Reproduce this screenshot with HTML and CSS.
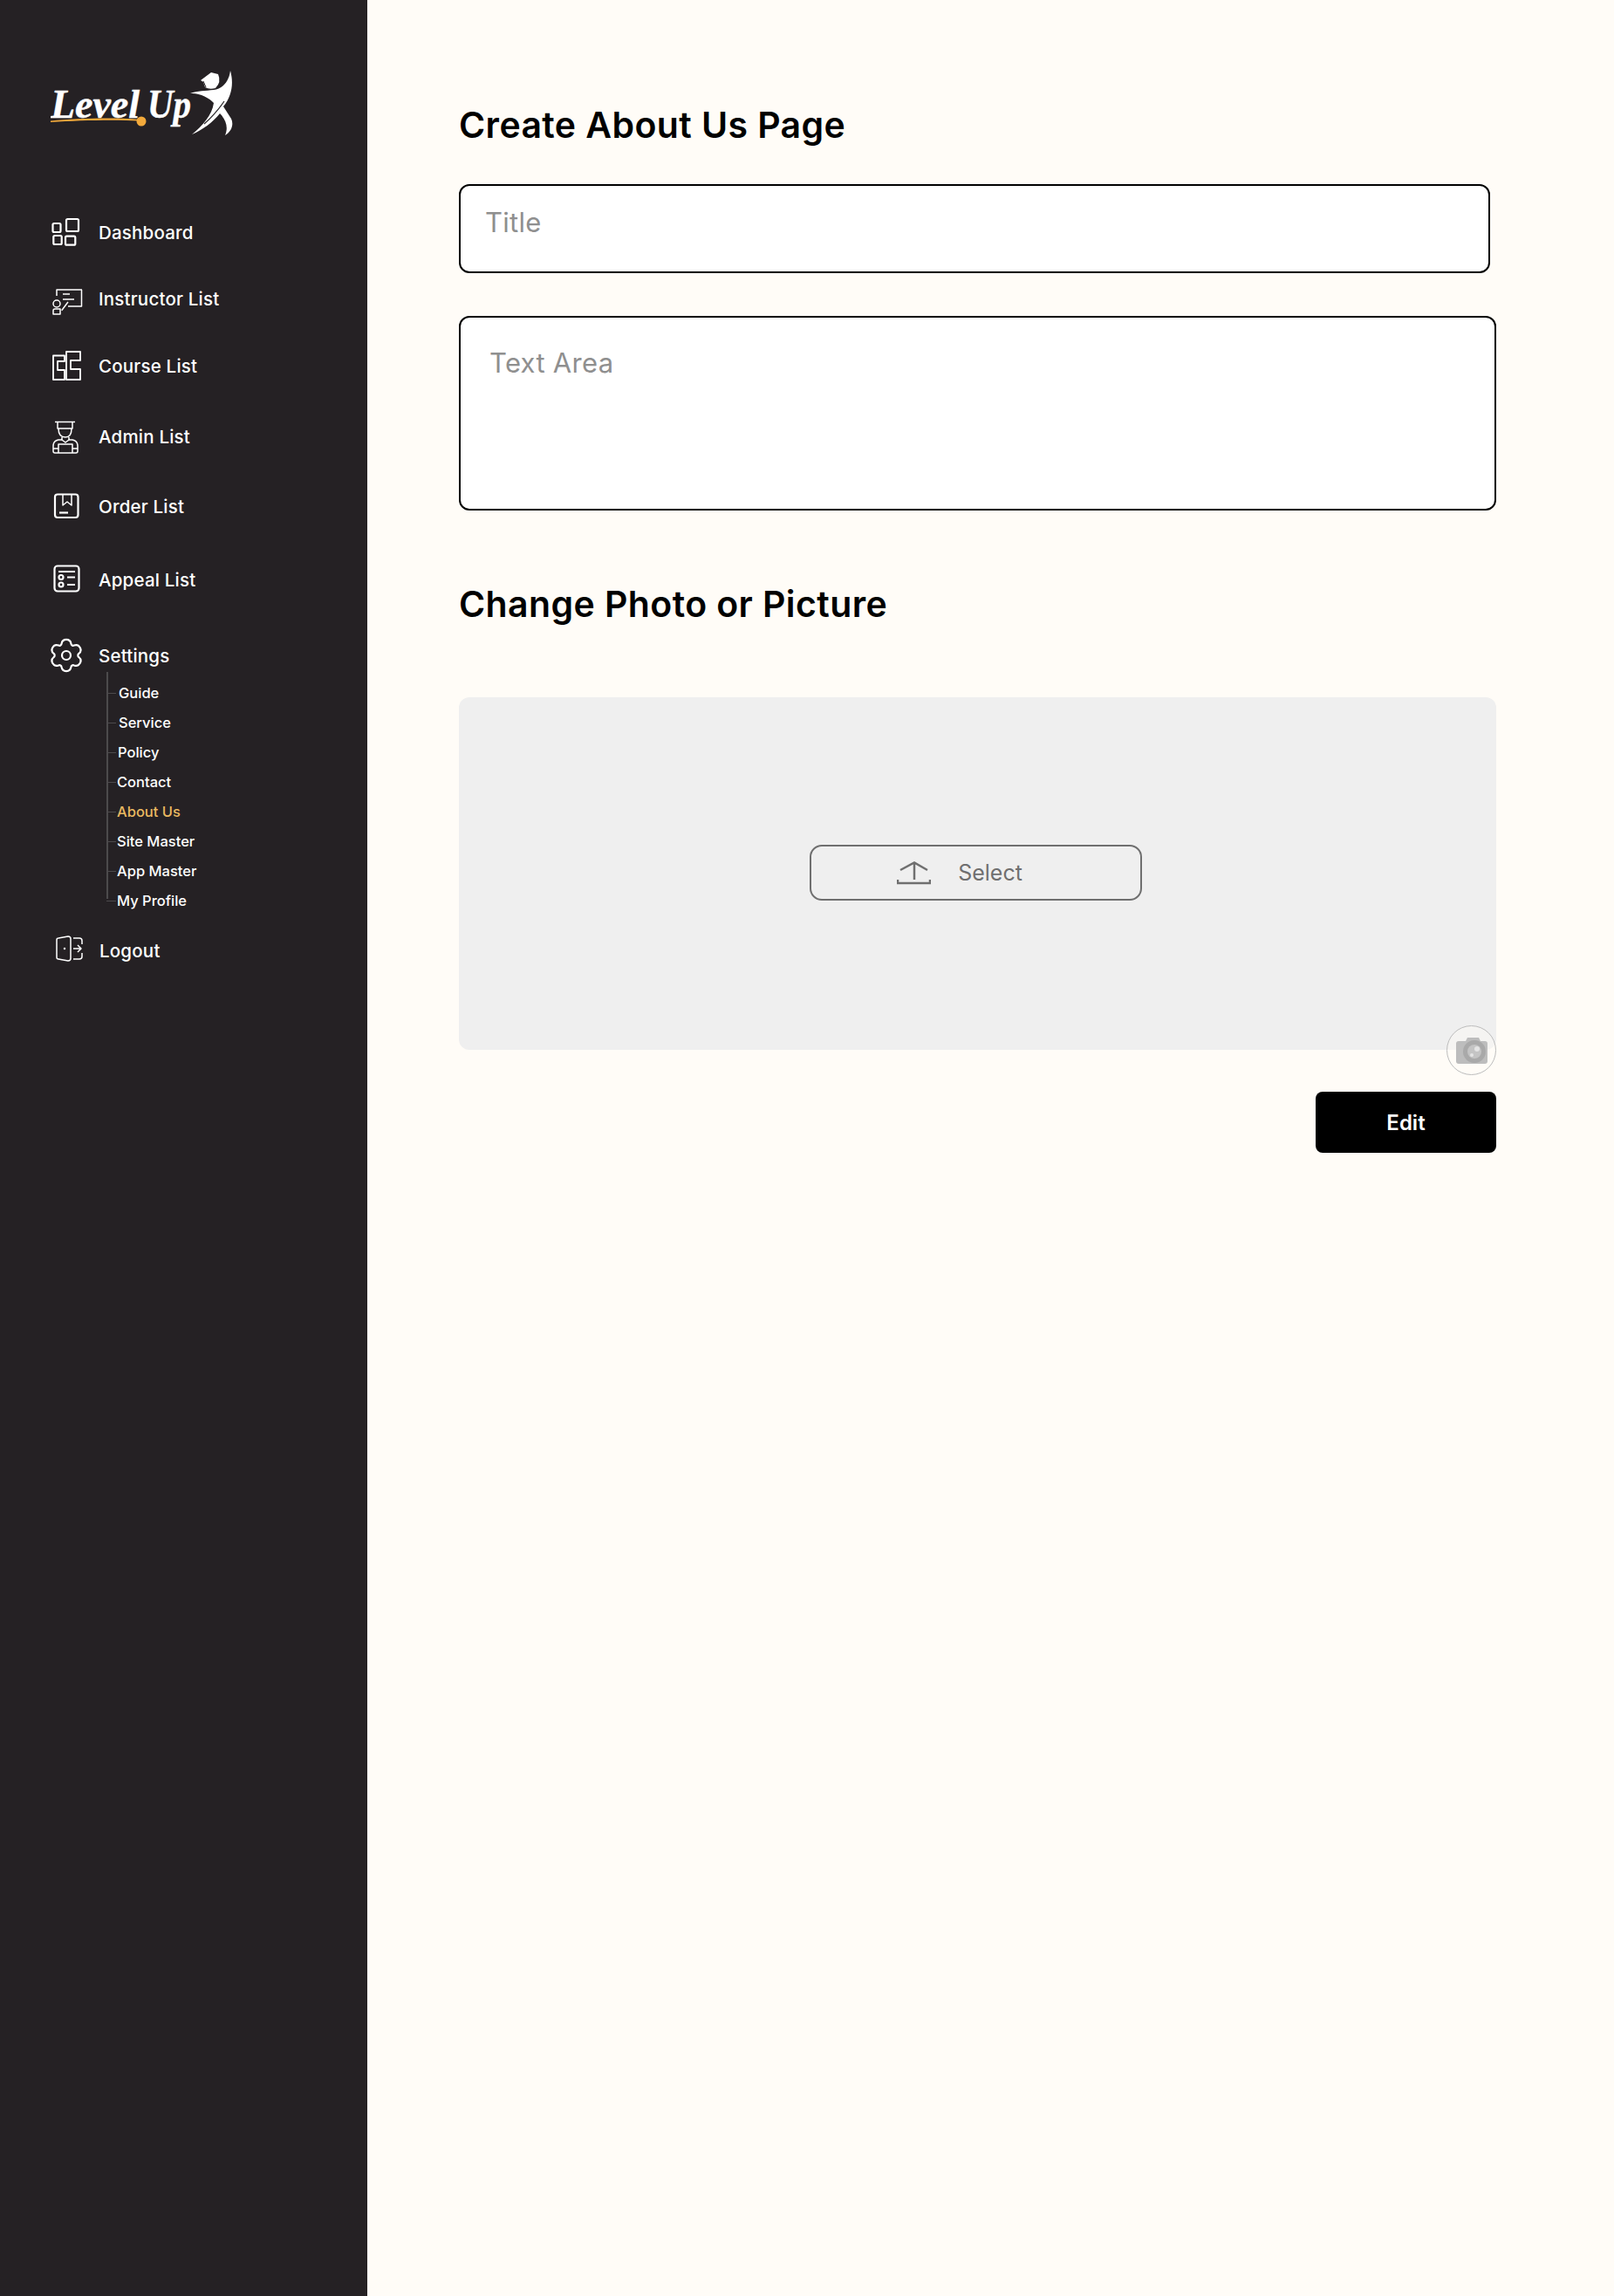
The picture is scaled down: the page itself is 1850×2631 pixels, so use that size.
FILE: index.html
```html
<!DOCTYPE html>
<html lang="en">
<head>
    <meta charset="UTF-8">
    <meta name="viewport" content="width=device-width, initial-scale=1.0">
    <title>Create About Us Page</title>
    <link rel="stylesheet" href="styles.css">
</head>
<body>

    <aside class="sidebar">
        <svg class="logo" viewBox="58 80 212 78" width="212" height="78">
            <text class="logo-text" x="58" y="135" textLength="102" lengthAdjust="spacingAndGlyphs">Level</text>
            <text class="logo-text" x="169" y="135" textLength="50" lengthAdjust="spacingAndGlyphs">Up</text>
            <path d="M58 138.500C90 135.500 130 134.500 160 137L160 138.500C130 137 90 138 58 140Z" fill="#f2a93b"/>
            <circle cx="162" cy="139" r="5.500" fill="#f2a93b"/>
            <path d="M218 107C226 104 236 104 245 103C253 102 262 96 264 81C268 95 266 110 256 122L265 136C268 142 266 150 258 155C262 146 259 137 252 130C244 140 232 149 220 154C232 144 243 132 245 118C240 112 228 106 218 107Z" fill="#fff"/>
            <path d="M257 116C250 126 242 135 234 142" fill="none" stroke="#242124" stroke-width="1.200"/>
            <path d="M230 92L242 83L250 85Q254 94 247 101Q240 103 235 100L233 94Z" fill="#fff"/>
            <path d="M233 93L236 100" fill="none" stroke="#242124" stroke-width="1"/>
        </svg>

        <nav class="menu">
            <a class="menu-item item-dashboard" href="#">
                <svg class="menu-icon" viewBox="0 0 40 40">
                    <rect x="4.500" y="10" width="9" height="10" rx="1.500"/>
                    <rect x="20" y="5" width="14" height="14" rx="1.500"/>
                    <rect x="5.300" y="24" width="9.400" height="10" rx="1.500"/>
                    <rect x="19" y="24.700" width="11.300" height="10" rx="1.500"/>
                </svg>
                <span>Dashboard</span>
            </a>
            <a class="menu-item item-instructor" href="#">
                <svg class="menu-icon thin" viewBox="0 0 40 40">
                    <path d="M9 17V10H38M37.500 10V29H22M16 15H24M16 21H29"/>
                    <circle cx="9" cy="26" r="4"/>
                    <path d="M5 38V34Q5 32 7 32H13V38ZM14.700 33.700L22 24"/>
                </svg>
                <span>Instructor List</span>
            </a>
            <a class="menu-item item-course" href="#">
                <svg class="menu-icon medium" viewBox="0 0 40 40">
                    <path d="M5 8.500H18V15H10V25H18V36H5Z"/>
                    <path d="M20 4H36V14H25V24H36V36H20Z"/>
                </svg>
                <span>Course List</span>
            </a>
            <a class="menu-item item-admin" href="#">
                <svg class="menu-icon thin" viewBox="0 0 40 40">
                    <path d="M7 3.500H30M10 4V11H27V4M11 11Q11 21 19 21Q26 21 26 11M15 21V24L19 27L23 24V21"/>
                    <path d="M15 24H11Q5 25 5 31V37Q5 39 7 39H31Q33 39 33 37V31Q33 25 27 24H23"/>
                    <path d="M11 39V29H27V39M5 34H11M27 34H33"/>
                </svg>
                <span>Admin List</span>
            </a>
            <a class="menu-item item-order" href="#">
                <svg class="menu-icon" viewBox="0 0 40 40">
                    <rect x="7" y="6.500" width="26.500" height="26.500" rx="3"/>
                    <path class="thin-line" d="M16 7V19L21 15L26 19V7"/>
                    <path d="M12 27.500H22"/>
                </svg>
                <span>Order List</span>
            </a>
            <a class="menu-item item-appeal" href="#">
                <svg class="menu-icon" viewBox="0 0 40 40">
                    <rect x="6.500" y="4.500" width="28" height="29" rx="3.500"/>
                    <path d="M11 11H30M21 17.500H30M21 26H30"/>
                    <circle cx="14" cy="17.500" r="2.500"/>
                    <circle cx="14" cy="26" r="2.500"/>
                </svg>
                <span>Appeal List</span>
            </a>
            <a class="menu-item item-settings" href="#">
                <svg class="menu-icon" viewBox="0 0 40 40">
                    <path d="M14.570 6.560A5.500 5.500 0 0 1 25.430 6.560A2.500 2.500 0 0 0 28.930 8.570A5.500 5.500 0 0 1 34.360 17.980A2.500 2.500 0 0 0 34.360 22.020A5.500 5.500 0 0 1 28.930 31.430A2.500 2.500 0 0 0 25.430 33.440A5.500 5.500 0 0 1 14.570 33.440A2.500 2.500 0 0 0 11.070 31.430A5.500 5.500 0 0 1 5.640 22.020A2.500 2.500 0 0 0 5.640 17.980A5.500 5.500 0 0 1 11.070 8.570A2.500 2.500 0 0 0 14.570 6.560Z"/>
                    <circle cx="20" cy="20" r="5"/>
                </svg>
                <span>Settings</span>
            </a>

            <ul class="submenu">
                <li class="sub-a"><a href="#">Guide</a></li>
                <li class="sub-a"><a href="#">Service</a></li>
                <li class="sub-b"><a href="#">Policy</a></li>
                <li><a href="#">Contact</a></li>
                <li class="active"><a href="#">About Us</a></li>
                <li><a href="#">Site Master</a></li>
                <li><a href="#">App Master</a></li>
                <li><a href="#">My Profile</a></li>
            </ul>

            <a class="menu-item item-logout" href="#">
                <svg class="menu-icon thin" viewBox="0 0 40 40">
                    <path d="M8 8Q8 6 10 6L21 4Q24 4 24 7V29Q24 32 21 32L10 30Q8 30 8 28Z"/>
                    <path d="M27 6H34Q37 6 37 9V13M37 23V27Q37 30 34 30H27M27 18H36M32 14L36 18L32 22"/>
                    <circle cx="17" cy="18" r="0.500"/>
                </svg>
                <span>Logout</span>
            </a>
        </nav>
    </aside>

    <main class="content">
        <h1 class="page-title">Create About Us Page</h1>
        <input class="field field-title" type="text" placeholder="Title">
        <textarea class="field field-area" placeholder="Text Area"></textarea>

        <h2 class="page-title section-title">Change Photo or Picture</h2>

        <div class="dropzone">
            <button class="select-btn" type="button">
                <svg viewBox="0 0 39 27" width="39" height="27">
                    <path d="M4 10L20 1.500L35 10M20 2V21M1 21V25H38V21"/>
                </svg>
                <span>Select</span>
            </button>
            <div class="camera">
                <svg viewBox="0 0 37 32" width="37" height="32">
                    <path d="M1 8Q1 5 4 5H12L14 1H27L29 5H34Q37 5 37 8V28Q37 31 34 31H4Q1 31 1 28Z" fill="#bdbdbd"/>
                    <circle cx="22" cy="17" r="13" fill="#a9a9a9"/>
                    <circle cx="22" cy="17" r="8" fill="#c4c4c4"/>
                    <circle cx="25" cy="14" r="3" fill="#e4e4e4"/>
                    <circle cx="19" cy="21" r="2" fill="#e4e4e4"/>
                </svg>
            </div>
        </div>

        <div class="actions">
            <button class="edit-btn" type="button">Edit</button>
        </div>
    </main>

</body>
</html>
```

FILE: styles.css
```css
body {
    font-family: Inter, "Open Sans", sans-serif;
    margin: 0;
    padding: 0;
    background-color: #fffcf7;
    display: flex;
    min-height: 100vh;
}

/* sidebar */
.sidebar {
    width: 421px;
    flex-shrink: 0;
    box-sizing: border-box;
    background-color: #252124;
    padding: 80px 0 0 56px;
}
.logo {
    display: block;
    margin-left: 2px;
}
.logo-text {
    font-family: "Liberation Serif", serif;
    font-size: 47px;
    font-weight: bold;
    font-style: italic;
    fill: #fff;
    stroke: #fff;
    stroke-width: 0.500;
}
.menu {
    margin-top: 88px;
}
.menu-item {
    display: flex;
    align-items: center;
    gap: 17px;
    height: 40px;
    color: white;
    text-decoration: none;
    font-size: 20.500px;
    letter-spacing: 0.200px;
    font-weight: 500;
}
.menu-icon {
    width: 40px;
    height: 40px;
    flex-shrink: 0;
    fill: none;
    stroke: white;
    stroke-width: 2.200;
    stroke-linejoin: round;
}
.menu-icon.thin {
    stroke-width: 1.500;
}
.menu-icon.medium {
    stroke-width: 1.800;
}
.thin-line {
    stroke-width: 1.500;
}
.item-instructor { margin-top: 36px; }
.item-course { margin-top: 37px; }
.item-admin { margin-top: 41px; }
.item-order { margin-top: 40px; }
.item-appeal { margin-top: 44px; }
.item-settings { margin-top: 47px; }
.item-logout {
    margin-top: 20px;
    margin-left: 1px;
}

.submenu {
    list-style: none;
    margin: -1px 0 0 66px;
    padding: 7px 0 0 0;
    width: 200px;
    position: relative;
}
.submenu::before {
    content: "";
    position: absolute;
    left: 0;
    top: 0;
    bottom: 19px;
    width: 2px;
    background-color: #4c4a4c;
}
.submenu li {
    display: flex;
    align-items: center;
    height: 34px;
    gap: 1px;
    font-size: 16.500px;
    font-weight: 500;
}
.submenu li::before {
    content: "";
    width: 11px;
    height: 1px;
    background-color: #4c4a4c;
}
.submenu li.sub-a { gap: 3px; }
.submenu li.sub-b { gap: 2px; }
.submenu a {
    color: white;
    text-decoration: none;
}
.submenu li.active a {
    color: #e9b860;
}

/* main area */
.content {
    flex: 1;
    padding: 115px 135px 0 105px;
}
.page-title {
    margin: 0;
    font-size: 41px;
    line-height: 56px;
    letter-spacing: 0.400px;
    font-weight: 600;
    color: #000;
}
.section-title {
    margin-top: 79px;
}
.field {
    display: block;
    box-sizing: border-box;
    background-color: white;
    border: 2px solid black;
    border-radius: 12px;
    font-family: inherit;
    font-size: 31px;
    letter-spacing: 0.300px;
    resize: none;
    outline: none;
}
.field::placeholder {
    color: #8f8f8f;
    opacity: 1;
}
.field-title {
    width: 1182px;
    height: 102px;
    margin-top: 40px;
    padding: 0 28px 15px;
}
.field-area {
    width: 1189px;
    height: 223px;
    margin-top: 49px;
    padding: 33px 33px 0;
}
.dropzone {
    position: relative;
    display: flex;
    align-items: center;
    justify-content: center;
    height: 404px;
    margin-top: 79px;
    background-color: #efefef;
    border-radius: 12px;
}
.select-btn {
    display: flex;
    align-items: center;
    justify-content: center;
    gap: 31px;
    width: 381px;
    height: 64px;
    margin: 0 4px 2px 0;
    padding: 0 37px 0 0;
    box-sizing: border-box;
    background: none;
    border: 2px solid #6f6f6f;
    border-radius: 14px;
    color: #6f6f6f;
    font-family: inherit;
    font-size: 25px;
}
.select-btn svg {
    fill: none;
    stroke: #6f6f6f;
    stroke-width: 2.500;
}
.camera {
    position: absolute;
    right: 0;
    bottom: -29px;
    width: 57px;
    height: 57px;
    box-sizing: border-box;
    display: flex;
    align-items: center;
    justify-content: center;
    border: 1px solid #bdbdbd;
    border-radius: 50%;
    background-color: rgba(255, 252, 247, 0.4);
}
.actions {
    display: flex;
    justify-content: flex-end;
    margin-top: 48px;
}
.edit-btn {
    width: 207px;
    height: 70px;
    background-color: black;
    color: white;
    border: none;
    border-radius: 8px;
    font-family: inherit;
    font-size: 24px;
    font-weight: 600;
}
```
